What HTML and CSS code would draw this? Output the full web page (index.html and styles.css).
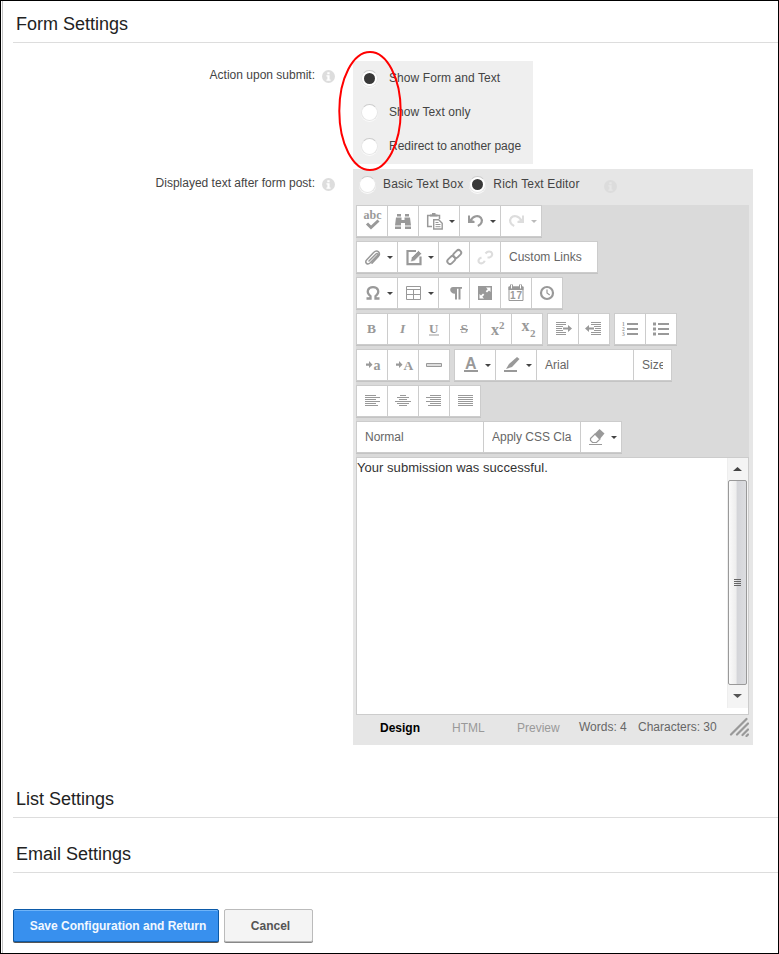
FILE: index.html
```
<!DOCTYPE html>
<html lang="en">
<head>
<meta charset="utf-8">
<title>Form Settings</title>
<link rel="stylesheet" href="styles.css">
</head>
<body>
<main class="page">
  <h2 class="heading first">Form Settings</h2>

  <div class="field action-field">
    <div class="label"><span class="t-action">Action upon submit:</span>
      <svg class="info" width="13" height="13" viewBox="0 0 13 13"><circle cx="6.5" cy="6.5" r="6.5" fill="#ddd"/><path d="M5.3 2.2h2.3v2H5.3zM4.4 5.2h3.2v4.3h1v1.2H4.4V9.5h1V6.4h-1z" fill="#fff"/></svg>
    </div>
    <div class="choices">
      <label class="choice"><span class="radio on"></span><span class="t-c1">Show Form and Text</span></label>
      <label class="choice"><span class="radio"></span><span class="t-c2">Show Text only</span></label>
      <label class="choice"><span class="radio"></span><span class="t-c3">Redirect to another page</span></label>
    </div>
    <svg class="marker" width="66" height="122" viewBox="0 0 66 122"><ellipse cx="33" cy="61" rx="30.7" ry="59" fill="none" stroke="#f00" stroke-width="2"/></svg>
  </div>

  <div class="field text-field">
    <div class="label"><span class="t-disp">Displayed text after form post:</span>
      <svg class="info" width="13" height="13" viewBox="0 0 13 13"><circle cx="6.5" cy="6.5" r="6.5" fill="#ddd"/><path d="M5.3 2.2h2.3v2H5.3zM4.4 5.2h3.2v4.3h1v1.2H4.4V9.5h1V6.4h-1z" fill="#fff"/></svg>
    </div>
    <div class="editor">
      <div class="modes">
        <span class="radio"></span><span class="t-basic">Basic Text Box</span>
        <span class="radio on"></span><span class="t-rich">Rich Text Editor</span>
        <svg class="info" width="13" height="13" viewBox="0 0 13 13"><circle cx="6.5" cy="6.5" r="6.5" fill="#dcdcdc"/><path d="M5.3 2.2h2.3v2H5.3zM4.4 5.2h3.2v4.3h1v1.2H4.4V9.5h1V6.4h-1z" fill="#e6e6e6"/></svg>
      </div>

      <div class="toolbar">
        <div class="tools"><div class="group">
          <span class="btn"><svg viewBox="0 0 30 30"><text class="serif" x="6.5" y="13" font-size="12" textLength="18">abc</text><path d="M10 17.500l4 4 7.5-7" fill="none" stroke="#999" stroke-width="3"/></svg></span>
          <span class="btn"><svg viewBox="0 0 30 30"><path d="M9 8h4v2.500H9zM17 8h4v2.500h-4zM8 11.500h5.500V14h3v-2.500H22l1 8h-6V17h-4v2.500H7zM7 20.500h6V23H7zM17 20.500h6V23h-6z" fill="#999"/></svg></span>
          <span class="btn drop"><svg viewBox="0 0 30 30"><path d="M13 20.500H8.700v-11H20.500V13" fill="none" stroke="#999" stroke-width="1.500"/><path d="M11 10.500V8.500h2V7h3.500v1.500h2v2z" fill="#999"/><path d="M14.700 13.700h5l3.500 3.500V23h-8.500z" fill="#fff" stroke="#999" stroke-width="1.400"/><path d="M16.500 16.500h3M16.500 18.500h5M16.500 20.700h5" stroke="#999"/></svg></span>
          <span class="btn drop"><svg viewBox="0 0 30 30"><path d="M10.500 14.500C13.500 9.500 18.500 9 20.800 11.700c2.300 3 .8 6.800-3 8.300" fill="none" stroke="#999" stroke-width="2.200"/><path d="M8 9.500h2v4l4.500 1.500v2H8z" fill="#999"/></svg></span>
          <span class="btn drop off"><svg viewBox="0 0 30 30"><path d="M20.500 14.500C17.500 9.500 12.500 9 10.200 11.700c-2.300 3-.8 6.800 3 8.300" fill="none" stroke="#ddd" stroke-width="2.200"/><path d="M23 9.500h-2v4L16.500 15v2H23z" fill="#ddd"/></svg></span>
        </div></div>

        <div class="tools"><div class="group">
          <span class="btn drop"><svg viewBox="0 0 30 30"><path d="M12 19l7-7c1.300-1.300 2.500.2 1.600 1.200l-7.300 7.600c-3 2.800-6-.3-3.500-3l6.800-7.300c3.600-3.400 8 .5 4.700 4.100l-6.300 6.600" fill="none" stroke="#999" stroke-width="1.500" stroke-linecap="round"/></svg></span>
          <span class="btn drop"><svg viewBox="0 0 30 30"><path d="M22.500 14.500v7.700h-13V9H18" fill="none" stroke="#999" stroke-width="2.200"/><path d="M12.500 20l1-4.500 7-7 3.200 3.200-7 7z" fill="#999" stroke="#fff" stroke-width=".7"/></svg></span>
          <span class="btn"><svg viewBox="0 0 30 30"><g fill="none" stroke="#999" stroke-width="1.900"><rect x="-4.500" y="-2.700" width="9" height="5.400" rx="2.700" transform="translate(18.200 12) rotate(-45)"/><rect x="-4.500" y="-2.700" width="9" height="5.400" rx="2.700" transform="translate(12.300 18) rotate(-45)"/></g></svg></span>
          <span class="btn"><svg viewBox="0 0 30 30"><path d="M15.500 11.500c2-2.500 4-2.300 5.600-1.500 1.700 1.500 1.500 4.500-1.600 5.500h-2M11.500 15.500c-3.500 1.200-3.600 4-2 5.300 2 1.300 4.500.2 5.200-2" fill="none" stroke="#ddd" stroke-width="2.100"/></svg></span>
          <span class="pick wide">Custom Links</span>
        </div></div>

        <div class="tools"><div class="group">
          <span class="btn drop"><svg viewBox="0 0 30 30"><path d="M9.500 20.500h4v-2.300c-5-4-2.500-9 2.500-9s7.500 5 2.500 9v2.300h4" fill="none" stroke="#999" stroke-width="2.300"/></svg></span>
          <span class="btn drop"><svg viewBox="0 0 30 30"><path d="M8.500 8.500h14v13h-14zM8.500 11.500h14M8.500 16.500h14M15.500 11.500v10" fill="none" stroke="#999"/></svg></span>
          <span class="btn"><svg viewBox="0 0 30 30"><path d="M14 9h9v1.700h-1.500V21.500h-2V10.700H18v10.800h-2v-5.700c-6-.3-6-6.800-2-6.800z" fill="#999"/></svg></span>
          <span class="btn"><svg viewBox="0 0 30 30"><path d="M8 8h14v14H8z" fill="#999"/><path d="M16 9.500h4.500V14L19 12.500l-2 2-1.300-1.300 2-2zM9.500 16l1.500 1.500 2-2 1.300 1.300-2 2 1.700 1.700H9.500z" fill="#fff"/></svg></span>
          <span class="btn"><svg viewBox="0 0 30 30"><path d="M8 9h14v13.500H8z" fill="#fff" stroke="#999"/><path d="M7.500 8.500h15V12h-15zM9 6.500h3V9H9zM18 6.500h3V9h-3z" fill="#999"/><path d="M10.500 7v3.500M19.500 7v3.500" stroke="#fff"/><text class="sans" x="9" y="21" font-size="10" textLength="12">17</text></svg></span>
          <span class="btn"><svg viewBox="0 0 30 30"><circle cx="15" cy="15" r="6" fill="none" stroke="#999" stroke-width="2.200"/><path d="M15 11.500V15l2.700 2" fill="none" stroke="#999" stroke-width="1.200"/></svg></span>
        </div></div>

        <div class="tools"><div class="group">
          <span class="btn"><svg viewBox="0 0 30 30"><text class="serif" x="10" y="19" font-size="13.500">B</text></svg></span>
          <span class="btn"><svg viewBox="0 0 30 30"><text class="serif it" x="12" y="19" font-size="13.500">I</text></svg></span>
          <span class="btn"><svg viewBox="0 0 30 30"><text class="serif" x="10" y="18.500" font-size="13">U</text><path d="M10 21h10" stroke="#999"/></svg></span>
          <span class="btn"><svg viewBox="0 0 30 30"><text class="serif" x="10.500" y="19" font-size="13.500">S</text><path d="M10 15.500h8" stroke="#999"/></svg></span>
          <span class="btn"><svg viewBox="0 0 30 30"><text class="serif" x="10" y="21" font-size="16">x</text><text class="serif" x="18" y="14.500" font-size="11">2</text></svg></span>
          <span class="btn"><svg viewBox="0 0 30 30"><text class="serif" x="9.500" y="17" font-size="16">x</text><text class="serif" x="18" y="23" font-size="11">2</text></svg></span>
        </div><div class="group">
          <span class="btn"><svg viewBox="0 0 30 30"><path d="M8 8.500h10M8 10.500h10M8 12.500h7M8 14.500h6M8 16.500h7M8 18.500h10M8 20.500h10" stroke="#999"/><path d="M15 13.500h5V11l4 3.500-4 3.500v-2.500h-5z" fill="#999"/></svg></span>
          <span class="btn"><svg viewBox="0 0 30 30"><path d="M12 8.500h10M12 10.500h10M15 12.500h7M16 14.500h6M15 16.500h7M12 18.500h10M12 20.500h10" stroke="#999"/><path d="M15 13.500h-5V11l-4 3.500 4 3.500v-2.500h5z" fill="#999"/></svg></span>
        </div><div class="group">
          <span class="btn"><svg viewBox="0 0 30 30"><path d="M12 10h11M12 15h11M12 20h11" stroke="#999" stroke-width="2"/><g font-size="5.500" class="serif"><text x="7" y="12">1</text><text x="7" y="17">2</text><text x="7" y="22">3</text></g></svg></span>
          <span class="btn"><svg viewBox="0 0 30 30"><path d="M12 10h11M12 15h11M12 20h11" stroke="#999" stroke-width="2"/><path d="M7 10h3M7 15h3M7 20h3" stroke="#999" stroke-width="2.800"/></svg></span>
        </div></div>

        <div class="tools"><div class="group">
          <span class="btn"><svg viewBox="0 0 30 30"><path d="M9 13.500h3V11l3.500 3.700L12 18v-2.300H9z" fill="#999"/><text class="serif" x="16.500" y="19.500" font-size="14">a</text></svg></span>
          <span class="btn"><svg viewBox="0 0 30 30"><path d="M8 13.500h3V11l3.500 3.700L11 18v-2.300H8z" fill="#999"/><text class="serif" x="15.500" y="19.500" font-size="13.500">A</text></svg></span>
          <span class="btn"><svg viewBox="0 0 30 30"><path d="M7.500 13.500h15v3h-15z" fill="#ddd" stroke="#999"/></svg></span>
        </div><div class="group">
          <span class="btn drop"><svg viewBox="0 0 30 30"><text class="sans" x="10" y="18.500" font-size="16">A</text><path d="M9 21h14" stroke="#999" stroke-width="2"/></svg></span>
          <span class="btn drop"><svg viewBox="0 0 30 30"><path d="M8 21h13" stroke="#999" stroke-width="2"/><path d="M10 19l3-5 8-7 2.500 2-7.500 8z" fill="#999"/></svg></span>
          <span class="pick wide">Arial</span>
          <span class="pick size"><span>Size</span></span>
        </div></div>

        <div class="tools"><div class="group">
          <span class="btn"><svg viewBox="0 0 30 30"><path d="M8 9.500h11M8 11.500h15M8 13.500h11M8 15.500h15M8 17.500h11M8 19.500h13" stroke="#999"/></svg></span>
          <span class="btn"><svg viewBox="0 0 30 30"><path d="M12 9.500h6M9 11.500h12M11 13.500h8M7 15.500h16M9 17.500h12M11 19.500h8" stroke="#999"/></svg></span>
          <span class="btn"><svg viewBox="0 0 30 30"><path d="M11 9.500h11M7 11.500h15M11 13.500h11M7 15.500h15M11 17.500h11M9 19.500h13" stroke="#999"/></svg></span>
          <span class="btn"><svg viewBox="0 0 30 30"><path d="M8 9.500h15M8 11.500h15M8 13.500h15M8 15.500h15M8 17.500h15M8 19.500h15" stroke="#999"/></svg></span>
        </div></div>

        <div class="tools"><div class="group">
          <span class="pick para">Normal</span>
          <span class="pick wide"><span>Apply CSS Cla</span></span>
          <span class="btn drop"><svg viewBox="0 0 30 30"><path d="M8 22.500h13" stroke="#999"/><path d="M9.500 16.500l4.500-4.500 5 5-3.500 3.500h-4l-2-2z" fill="#fff" stroke="#999" stroke-width="1.200"/><path d="M13.500 12l5-5 5 4.500-5 6z" fill="#999"/></svg></span>
        </div></div>
      </div>

      <div class="content">
        <p class="t-body">Your submission was successful.</p>
        <div class="scroll">
          <svg class="arrow" width="9" height="4" viewBox="0 0 9 4"><path d="M0 4l4.500-4L9 4z" fill="#444"/></svg>
          <div class="thumb"><i></i><i></i><i></i><i></i></div>
          <svg class="arrow" width="9" height="4" viewBox="0 0 9 4"><path d="M0 0l4.500 4L9 0z" fill="#555"/></svg>
        </div>
      </div>

      <div class="status">
        <span class="tab design">Design</span>
        <span class="tab html">HTML</span>
        <span class="tab preview">Preview</span>
        <span class="count words">Words: 4</span>
        <span class="count chars">Characters: 30</span>
        <svg class="grip" width="20" height="20" viewBox="0 0 20 20"><path d="M2 17.500L17.500 2M8 17.500L19 6.500M13.500 18L19 12.500M17.500 19l1.500-1.500" stroke="#999" stroke-width="2.200" stroke-linecap="round"/></svg>
      </div>
    </div>
  </div>

  <h2 class="heading list">List Settings</h2>
  <h2 class="heading email">Email Settings</h2>
  <div class="actions">
    <button class="action primary">Save Configuration and Return</button>
    <button class="action plain">Cancel</button>
  </div>
</main>
</body>
</html>
```
FILE: styles.css
```
* { box-sizing: border-box; }
body { margin: 0; background: #fff; font: 12px/16px "Liberation Sans", Arial, sans-serif; color: #444; }
.page { width: 779px; height: 954px; border: 1px solid #000; padding-left: 12px; overflow: hidden; position: relative; background: linear-gradient(#c4c4c4, #c4c4c4) 1px 0 / 1px 100% no-repeat #fff; }
.heading { margin: 0; font-weight: 400; font-size: 18px; line-height: 22px; color: #222; border-bottom: 1px solid #ddd; padding: 12px 0 7px 3px; height: 42px; }
.heading.list { margin-top: 31px; }
.heading.email { margin-top: 13px; }
.field { display: flex; position: relative; }
.action-field { margin-top: 18px; z-index: 1; }
.text-field { margin-top: 5px; }
.label { width: 340px; flex: none; display: flex; justify-content: flex-end; padding: 6px 18px 0 0; gap: 7px; white-space: nowrap; }
.info { flex: none; margin-top: 3px; }
.choices { width: 180px; height: 103px; background: #efefef; padding-left: 8px; }
.choice { display: flex; align-items: center; height: 34px; gap: 11px; white-space: nowrap; }
.t-c1, .t-c2 { letter-spacing: .08px; }
.radio { flex: none; width: 17px; height: 17px; border-radius: 9px; background: #fff; border: 1px solid #e6e6e6; border-top-color: #ccc; box-shadow: 0 1px 0 #fafafa; display: flex; align-items: center; justify-content: center; }
.choice .radio { margin-top: 1px; }
.radio.on::before { content: ""; width: 11px; height: 11px; border-radius: 50%; background: #383838; }
.marker { position: absolute; left: 324px; top: -11px; }
.editor { width: 400px; height: 576px; background: #e6e6e6; padding: 0 4px 0 3px; }
.modes { height: 36px; display: flex; align-items: center; padding: 0 0 6px 3px; white-space: nowrap; }
.modes .radio { margin: 1px 7px 0 0; }
.modes .on { margin-left: 6px; margin-right: 7px; }
.modes .info { margin: 4px 0 0 24px; }
.t-basic { letter-spacing: .13px; }
.t-rich { letter-spacing: .15px; }
.toolbar { height: 252px; background: #dadada; }
.tools { display: flex; gap: 4px; height: 36px; }
.group { display: flex; gap: 1px; height: 32px; background: #ccc; border: 1px solid #ccc; box-shadow: 0 1px 0 #c4c4c4; }
.btn { width: 30px; height: 30px; background: #fff; display: flex; align-items: center; }
.btn svg { width: 30px; height: 30px; flex: none; }
.btn.drop { width: 40px; }
.btn.drop::after { content: ""; border: 3.5px solid transparent; border-top: 3px solid #444; border-bottom: 0; }
.btn.off::after { border-top-color: #bbb; }
.serif { font-family: "Liberation Serif", serif; font-weight: 700; fill: #999; }
.sans { font-family: "Liberation Sans", sans-serif; font-weight: 700; fill: #999; }
.it { font-style: italic; }
.pick { background: #fff; height: 30px; padding: 0 8px; line-height: 31px; color: #666; white-space: nowrap; overflow: hidden; }
.pick > span { display: block; overflow: hidden; }
.wide { width: 96px; }
.size { width: 37px; }
.para { width: 126px; }
.content { height: 258px; background: #fff; border: 1px solid #ccc; display: flex; justify-content: space-between; }
.t-body { margin: 2px 0 0; font-size: 13px; letter-spacing: .04px; color: #333; white-space: nowrap; }
.scroll { width: 21px; height: 250px; background: #f4f4f4; display: flex; flex-direction: column; align-items: center; padding: 9px 1px 8px 0; gap: 9px; border-left: 1px solid #eee; }
.arrow { flex: none; }
.thumb { align-self: stretch; height: 205px; flex: none; border: 1px solid #999; border-radius: 2px; background: linear-gradient(90deg, #fafafa, #eee 40%, #d4d5d9 50%, #dcdde0); display: flex; flex-direction: column; gap: 1px; align-items: center; justify-content: center; }
.thumb i { width: 7px; height: 1px; background: #666; }
.status { height: 30px; display: flex; white-space: nowrap; padding-top: 5px; }
.tab { color: #999; }
.design { color: #000; font-weight: 700; margin-left: 24px; width: 72px; }
.html { width: 65px; }
.preview { width: 62px; }
.count { color: #666; margin-top: -1px; }
.words { width: 59px; }
.chars { width: 91px; }
.grip { margin-top: -3px; }
.actions { display: flex; gap: 5px; margin-top: 36px; }
.action { font: 700 12px/16px "Liberation Sans", Arial, sans-serif; height: 33px; padding: 0; border-radius: 2px; box-shadow: 0 1px 0 #888; white-space: nowrap; }
.primary { width: 206px; color: #f2f8ff; background: #3890ee; border: 1px solid #0c5aa8; box-shadow: 0 1px 0 #555, inset 0 1px 0 #70b4f8; padding-left: 4px; }
.plain { width: 89px; color: #555; background: #f4f4f4; border: 1px solid #bbb; padding-left: 4px; }
```
